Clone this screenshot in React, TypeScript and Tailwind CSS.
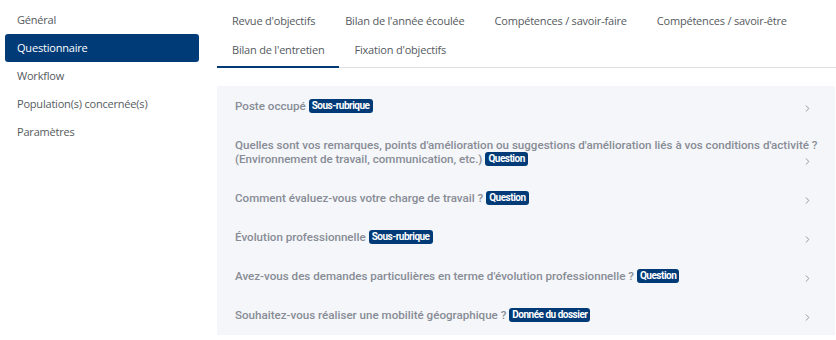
import { ChevronRight } from "lucide-react";

const menu = ["Général", "Questionnaire", "Workflow", "Population(s) concernée(s)", "Paramètres"];

const tabsRow1 = ["Revue d'objectifs", "Bilan de l'année écoulée", "Compétences / savoir-faire", "Compétences / savoir-être"];
const tabsRow2 = ["Bilan de l'entretien", "Fixation d'objectifs"];

const items: { title: string[]; badge: string }[] = [
  { title: ["Poste occupé"], badge: "Sous-rubrique" },
  {
    title: [
      "Quelles sont vos remarques, points d'amélioration ou suggestions d'amélioration liés à vos conditions d'activité ?",
      "(Environnement de travail, communication, etc.)",
    ],
    badge: "Question",
  },
  { title: ["Comment évaluez-vous votre charge de travail ?"], badge: "Question" },
  { title: ["Évolution professionnelle"], badge: "Sous-rubrique" },
  { title: ["Avez-vous des demandes particulières en terme d'évolution professionnelle ?"], badge: "Question" },
  { title: ["Souhaitez-vous réaliser une mobilité géographique ?"], badge: "Donnée du dossier" },
];

function Badge({ label }: { label: string }) {
  return (
    <span className="inline-block ml-[3px] px-[3px] rounded-[3px] bg-[#003b78] text-white text-[10px] leading-[14px] font-bold tracking-[-0.5px] font-['Roboto',sans-serif] align-[1px]">
      {label}
    </span>
  );
}

export default function App() {
  return (
    <div className="w-[836px] h-[340px] bg-white flex font-['Open_Sans',sans-serif] tracking-[-0.2px] overflow-hidden">
      {/* Sidebar */}
      <nav className="w-[217px] shrink-0 pl-[5px] pr-[18px] pt-[6px] flex flex-col">
        {menu.map((m) => (
          <div
            key={m}
            className={`h-[28px] flex items-center px-3 rounded-[3px] text-[11px] whitespace-nowrap ${
              m === "Questionnaire" ? "bg-[#003b78] text-white" : "text-[#555a60]"
            }`}
          >
            {m}
          </div>
        ))}
      </nav>

      {/* Main */}
      <div className="flex-1 min-w-0 flex flex-col">
        <div className="border-b border-[#dfe1e4] text-[11px] text-[#555a60] whitespace-nowrap">
          <div className="flex h-[38px] pt-[4px] items-center">
            {tabsRow1.map((t) => (
              <div key={t} className="px-[15px]">
                {t}
              </div>
            ))}
          </div>
          <div className="flex h-[29px]">
            {tabsRow2.map((t, i) => (
              <div
                key={t}
                className={`px-[15px] flex items-start pt-[4px] ${i === 0 ? "border-b-2 border-[#003b78] -mb-px" : ""}`}
              >
                {t}
              </div>
            ))}
          </div>
        </div>

        <div className="mt-[18px] mr-px h-[249px] bg-[#f4f6fa] font-['Roboto',sans-serif] tracking-normal">
          {items.map((it, idx) => (
            <div key={idx} className="flex items-end pl-[18px] pr-[22px] py-[12.5px]">
              <div className="flex-1 min-w-0 text-[11.6px] leading-[14px] font-medium text-[#888c95] whitespace-nowrap">
                {it.title.map((line, li) => (
                  <div key={li}>
                    {line}
                    {li === it.title.length - 1 && <Badge label={it.badge} />}
                  </div>
                ))}
              </div>
              <ChevronRight className="shrink-0 w-[11px] h-[11px] mb-[-1px] text-[#8c9099]" strokeWidth={2} />
            </div>
          ))}
        </div>
      </div>
    </div>
  );
}
